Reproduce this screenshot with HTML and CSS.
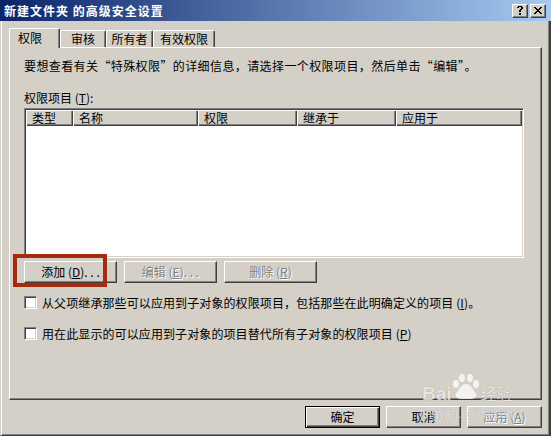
FILE: index.html
```html
<!DOCTYPE html>
<html lang="zh-CN">
<head>
<meta charset="utf-8">
<title>新建文件夹 的高级安全设置</title>
<link rel="stylesheet" href="styles.css">
</head>
<body>
<div class="window">
  <div class="titlebar">
    <span class="title">新建文件夹 的高级安全设置</span>
    <div class="caption-btns">
      <span class="cbtn">
        <svg width="6" height="9" viewBox="0 0 6 9" shape-rendering="crispEdges" fill="#000">
          <rect x="1" y="0" width="4" height="1"/>
          <rect x="0" y="1" width="2" height="1"/><rect x="4" y="1" width="2" height="1"/>
          <rect x="4" y="2" width="2" height="1"/>
          <rect x="3" y="3" width="2" height="1"/>
          <rect x="2" y="4" width="2" height="2"/>
          <rect x="2" y="7" width="2" height="2"/>
        </svg>
      </span>
      <span class="cbtn">
        <svg width="8" height="7" viewBox="0 0 8 7" shape-rendering="crispEdges" fill="#000">
          <rect x="0" y="0" width="2" height="1"/><rect x="6" y="0" width="2" height="1"/>
          <rect x="1" y="1" width="2" height="1"/><rect x="5" y="1" width="2" height="1"/>
          <rect x="2" y="2" width="4" height="1"/>
          <rect x="3" y="3" width="2" height="1"/>
          <rect x="2" y="4" width="4" height="1"/>
          <rect x="1" y="5" width="2" height="1"/><rect x="5" y="5" width="2" height="1"/>
          <rect x="0" y="6" width="2" height="1"/><rect x="6" y="6" width="2" height="1"/>
        </svg>
      </span>
    </div>
  </div>

  <div class="client">
    <div class="tabs">
      <div class="tab active tab-w1">权限</div>
      <div class="tab tab-w2">审核</div>
      <div class="tab tab-w3">所有者</div>
      <div class="tab tab-w4">有效权限</div>
    </div>

    <div class="panel">
      <p class="intro">要想查看有关“特殊权限”的详细信息，请选择一个权限项目，然后单击“编辑”。</p>
      <div class="label">权限项目 (<u>T</u>):</div>

      <div class="list">
        <div class="list-head">
          <span class="col col-type">类型</span>
          <span class="col col-name">名称</span>
          <span class="col col-perm">权限</span>
          <span class="col col-inh">继承于</span>
          <span class="col col-apply">应用于</span>
        </div>
        <div class="list-body"></div>
      </div>

      <div class="btn-row">
        <button class="btn btn-wide">添加 (<u>D</u>). . .</button>
        <button class="btn btn-wide" disabled>编辑 (<u>E</u>). . .</button>
        <button class="btn btn-wide" disabled>删除 (<u>R</u>)</button>
        <span class="highlight"></span>
      </div>

      <div class="check check-1">
        <span class="box"></span>
        <span class="check-text">从父项继承那些可以应用到子对象的权限项目，包括那些在此明确定义的项目 (<u>I</u>)。</span>
      </div>
      <div class="check check-2">
        <span class="box"></span>
        <span class="check-text">用在此显示的可以应用到子对象的项目替代所有子对象的权限项目 (<u>P</u>)</span>
      </div>
    </div>

    <div class="footer">
      <button class="btn btn-default">确定</button>
      <button class="btn">取消</button>
      <button class="btn" disabled>应用 (<u>A</u>)</button>
    </div>
  </div>

  <div class="watermark">
    <div class="wm-logo">
      <span class="wm-bai">Bai</span>
      <svg class="wm-paw" width="28" height="26" viewBox="0 0 28 26">
        <ellipse cx="4" cy="10" rx="3" ry="4"/>
        <ellipse cx="10" cy="4" rx="3" ry="4"/>
        <ellipse cx="18" cy="4" rx="3" ry="4"/>
        <ellipse cx="24" cy="10" rx="3" ry="4"/>
        <path d="M14 10 C9 10 8 15 5 18 C2 21 4 25 9 25 L19 25 C24 25 26 21 23 18 C20 15 19 10 14 10 Z"/>
      </svg>
      <span class="wm-jy">经验</span>
    </div>
    <div class="wm-url">jingyan.baidu.com</div>
  </div>
</div>
</body>
</html>
```

FILE: styles.css
```css
* {
  box-sizing: border-box;
}

html,
body {
  margin: 0;
  padding: 0;
}

body {
  width: 551px;
  height: 436px;
  overflow: hidden;
  background: #d4d0c8;
  font-family: "Noto Sans CJK SC", "Noto Sans", sans-serif;
  font-size: 12px;
  color: #000;
}

u {
  text-decoration: underline;
  text-underline-offset: 1px;
}

.window {
  position: relative;
  width: 551px;
  height: 436px;
  display: flex;
  flex-direction: column;
  background: #d4d0c8;
}

/* ---------- title bar ---------- */
.titlebar {
  flex: none;
  height: 21px;
  display: flex;
  align-items: center;
  justify-content: space-between;
  padding: 0 5px 0 4px;
  background: linear-gradient(to right, #0a246a 0%, #a6caf0 100%);
  color: #fff;
}

.title {
  font-weight: bold;
  font-size: 12px;
  line-height: 14px;
  letter-spacing: 1px;
  white-space: pre;
}

.caption-btns {
  display: flex;
  gap: 2px;
}

.cbtn {
  width: 16px;
  height: 14px;
  display: flex;
  align-items: center;
  justify-content: center;
  background: #d4d0c8;
  border: 1px solid;
  border-color: #fff #404040 #404040 #fff;
  box-shadow: inset -1px -1px 0 #808080;
  padding-bottom: 1px;
}

/* ---------- client area ---------- */
.client {
  flex: 1;
  display: flex;
  flex-direction: column;
  border-left: 1px solid #d4d0c8;
  border-right: 2px solid #404040;
  border-bottom: 1px solid #404040;
  box-shadow: inset 1px 0 0 #fff, inset -1px -1px 0 #808080;
  padding: 7px 7px 0 8px;
}

/* ---------- tabs ---------- */
.tabs {
  position: relative;
  z-index: 1;
  display: flex;
  align-items: flex-end;
  height: 19px;
}

.tab {
  height: 17px;
  border-top: 1px solid #fff;
  border-left: 1px solid #fff;
  border-right: 1px solid #404040;
  border-radius: 2px 2px 0 0;
  box-shadow: inset -1px 0 0 #808080;
  background: #d4d0c8;
  text-align: center;
  line-height: 16px;
  white-space: nowrap;
}

.tab.active {
  height: 20px;
  margin-bottom: -1px;
  line-height: 18px;
  text-align: left;
  padding-left: 8px;
}

.tab-w1 { width: 51px; }
.tab-w2 { width: 46px; }
.tab-w3 { width: 47px; }
.tab-w4 { width: 62px; }

/* ---------- panel ---------- */
.panel {
  height: 353px;
  display: flex;
  flex-direction: column;
  border-top: 1px solid #fff;
  border-left: 1px solid #fff;
  border-right: 1px solid #404040;
  border-bottom: 1px solid #404040;
  box-shadow: inset -1px -1px 0 #808080;
  padding: 11px 17px 0 14px;
}

.intro {
  margin: 0;
  line-height: 14px;
  letter-spacing: 0.4px;
  white-space: nowrap;
}

.label {
  margin-top: 18px;
  line-height: 14px;
}

/* ---------- list view ---------- */
.list {
  margin-top: 3px;
  height: 150px;
  display: flex;
  flex-direction: column;
  border: 1px solid;
  border-color: #808080 #fff #fff #808080;
  box-shadow: inset 1px 1px 0 #404040, inset -1px -1px 0 #d4d0c8;
  padding: 1px;
  background: #fff;
}

.list-head {
  display: flex;
  height: 16px;
  flex: none;
}

.col {
  display: block;
  height: 16px;
  line-height: 15px;
  padding-left: 6px;
  background: #d4d0c8;
  box-shadow: inset 1px 1px 0 #fff, inset -1px -1px 0 #404040, inset -2px -2px 0 #808080;
  white-space: nowrap;
}

.col-type { width: 47px; }
.col-name { width: 125px; }
.col-perm { width: 99px; }
.col-inh { width: 99px; }
.col-apply { width: 126px; }

.list-body {
  flex: 1;
  background: #fff;
}

/* ---------- buttons ---------- */
.btn {
  font: inherit;
  color: #000;
  margin: 0;
  padding: 0;
  width: 75px;
  height: 22px;
  line-height: 18px;
  background: #d4d0c8;
  border: 1px solid;
  border-color: #fff #404040 #404040 #fff;
  box-shadow: inset -1px -1px 0 #808080;
  text-align: center;
  white-space: nowrap;
}

.btn:disabled {
  color: #808080;
  text-shadow: 1px 1px 0 #fff;
}

.btn-default {
  border-color: #000;
  box-shadow: inset 1px 1px 0 #fff, inset -1px -1px 0 #404040, inset -2px -2px 0 #808080;
}

.btn-row {
  position: relative;
  margin-top: 3px;
  display: flex;
  gap: 7px;
}

.btn-wide {
  width: 93px;
}

.highlight {
  position: absolute;
  left: -11px;
  top: -7px;
  width: 94px;
  height: 33px;
  border: 4px solid #a52a0e;
  pointer-events: none;
}

/* ---------- checkboxes ---------- */
.check {
  display: flex;
  align-items: center;
  gap: 5px;
  height: 13px;
  line-height: 13px;
  white-space: nowrap;
}

.check-text {
  letter-spacing: 0.1px;
}

.check-1 { margin-top: 13px; }
.check-2 { margin-top: 18px; }

.box {
  flex: none;
  width: 13px;
  height: 13px;
  background: #fff;
  border: 1px solid;
  border-color: #808080 #fff #fff #808080;
  box-shadow: inset 1px 1px 0 #404040, inset -1px -1px 0 #d4d0c8;
}

/* ---------- footer ---------- */
.footer {
  display: flex;
  justify-content: flex-end;
  gap: 6px;
  margin-top: 6px;
}

/* ---------- watermark ---------- */
.watermark {
  position: absolute;
  left: 418px;
  top: 374px;
  width: 110px;
  pointer-events: none;
  color: rgba(255, 255, 255, 0.75);
}

.wm-logo {
  display: flex;
  align-items: flex-end;
  height: 29px;
}

.wm-bai {
  font-family: "Liberation Sans", Arial, sans-serif;
  font-weight: bold;
  font-size: 19px;
  line-height: 19px;
  margin-left: 4px;
  text-shadow: 0 0 1px rgba(0, 0, 0, 0.3);
}

.wm-paw {
  fill: rgba(255, 255, 255, 0.75);
  margin: 0 1px 0 0;
  align-self: flex-start;
}

.wm-jy {
  font-size: 16px;
  line-height: 19px;
  text-shadow: 0 0 1px rgba(0, 0, 0, 0.3);
}

.wm-url {
  font-family: "Liberation Sans", Arial, sans-serif;
  font-size: 12px;
  line-height: 14px;
  margin-top: 4px;
  padding-left: 2px;
  color: rgba(255, 255, 255, 0.7);
  text-shadow: 0 0 1px rgba(0, 0, 0, 0.25);
}
```
